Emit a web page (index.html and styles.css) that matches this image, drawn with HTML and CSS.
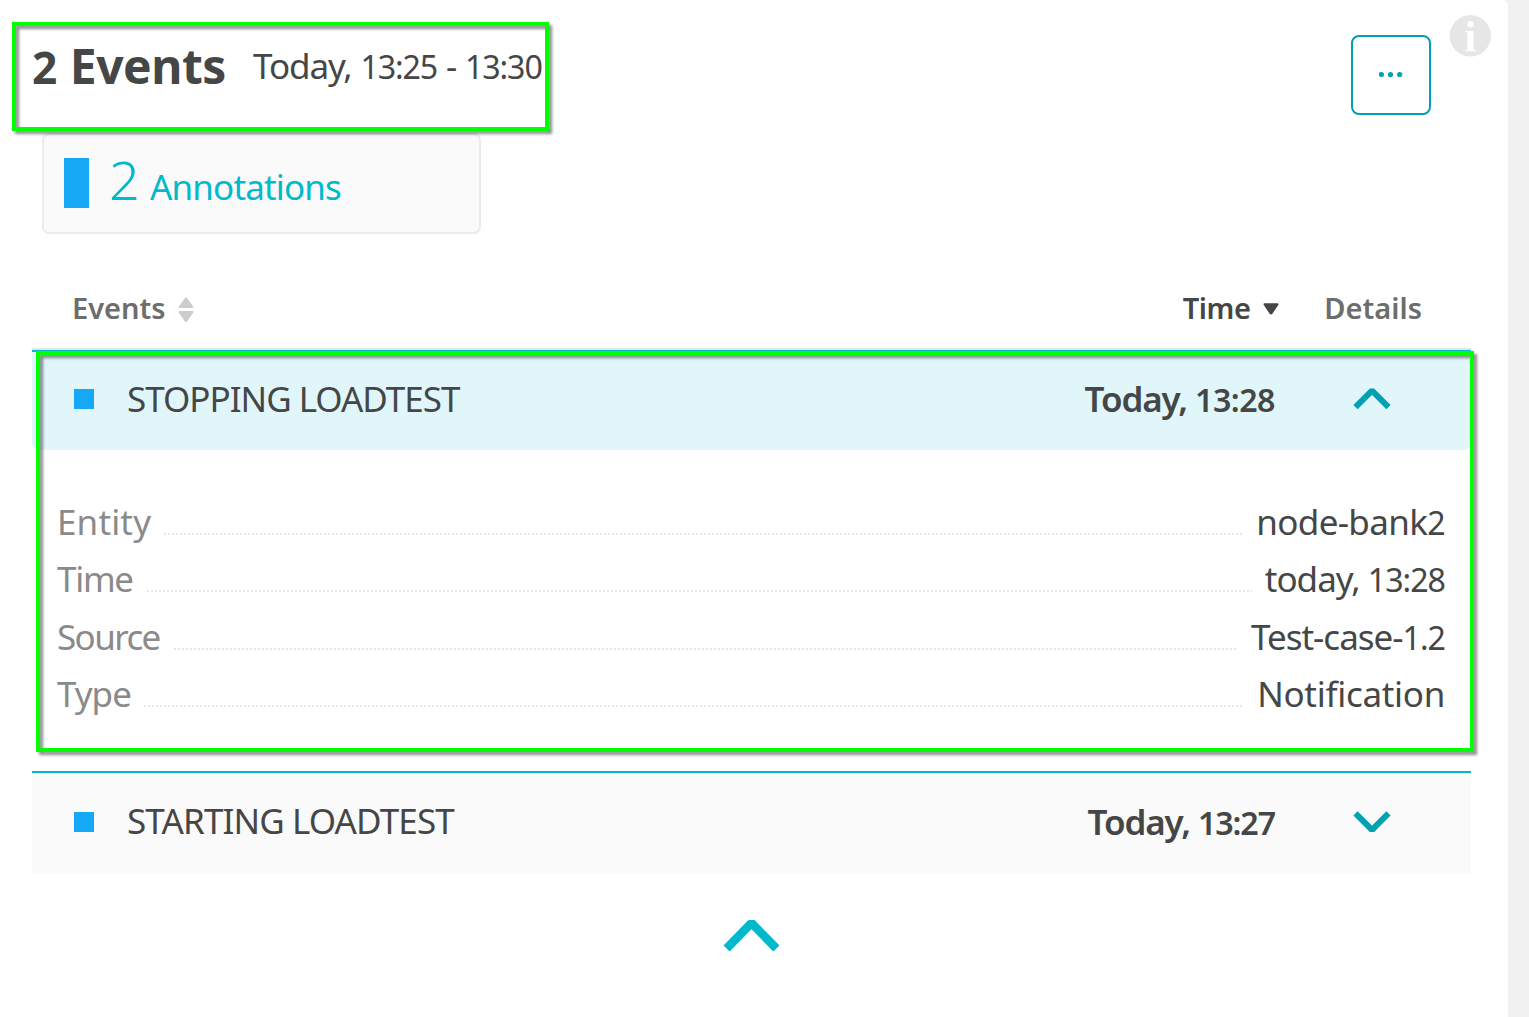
FILE: index.html
```html
<!DOCTYPE html>
<html lang="en">
<head>
<meta charset="utf-8">
<title>Events</title>
<link rel="stylesheet" href="styles.css">
</head>
<body>
<main class="panel">
  <header class="head">
    <h1 class="title"><span class="num">2</span> Events</h1>
    <span class="range">Today, <span class="num">13:25</span> - <span class="num">13:30</span></span>
    <button class="more" aria-label="More">
      <svg width="24" height="8" viewBox="0 0 24 8" fill="#00a1b2"><circle cx="2.4" cy="3.5" r="2.6"/><circle cx="11.5" cy="3.5" r="2.6"/><circle cx="20.7" cy="3.5" r="2.6"/></svg>
    </button>
    <svg class="info" width="42" height="42" viewBox="0 0 42 42"><circle cx="21.3" cy="20.8" r="20.7" fill="#e6e6e6"/><circle cx="21.5" cy="9.3" r="3.2" fill="#fff"/><path d="M16 16H24.6V34.2Q24.8 35.2 27 35.3V36.2H16V35.3Q18.2 35.2 18.4 34.2V18.4Q18.2 17.2 16 17Z" fill="#fff"/></svg>
  </header>

  <section class="legend">
    <span class="swatch"></span>
    <span class="count">2</span>
    <span class="kind">Annotations</span>
  </section>

  <section class="table">
    <div class="columns">
      <span class="col-events">Events</span>
      <svg class="sort" width="16" height="26" viewBox="0 0 16 26" fill="#ccc"><path d="M7 1Q8 0 9 1L15.3 9.8Q15.8 11 14.6 11H1.4Q.2 11 .7 9.8Z"/><path d="M7 24.6Q8 25.6 9 24.6L15.3 15.4Q15.8 14 14.6 14H1.4Q.2 14 .7 15.4Z"/></svg>
      <span class="col-time">Time</span>
      <svg class="sorted" width="16" height="12" viewBox="0 0 16 12" fill="#454646"><path d="M6.6 10.8Q8 12.2 9.4 10.8L15.4 1.8Q15.8 .3 14.6 .3H1.4Q.2 .3 .6 1.8Z"/></svg>
      <span class="col-details">Details</span>
    </div>

    <div class="row open">
      <span class="dot"></span>
      <span class="name stopping">STOPPING LOADTEST</span>
      <span class="when">Today, <span class="num">13:28</span></span>
      <svg class="chevron" width="38" height="24" viewBox="0 0 38 24"><path d="M2.5 20.2L19 3.7L35.5 20.2"/></svg>
    </div>

    <dl class="details">
      <div class="pair"><dt class="entity">Entity</dt><i class="leader"></i><dd class="node">node-bank<span class="num">2</span></dd></div>
      <div class="pair"><dt class="time">Time</dt><i class="leader"></i><dd class="today">today, <span class="num">13:28</span></dd></div>
      <div class="pair"><dt class="source">Source</dt><i class="leader"></i><dd class="test">Test-case-<span class="num">1.2</span></dd></div>
      <div class="pair"><dt class="type">Type</dt><i class="leader"></i><dd class="note">Notification</dd></div>
    </dl>

    <div class="row">
      <span class="dot"></span>
      <span class="name starting">STARTING LOADTEST</span>
      <span class="when earlier">Today, <span class="num">13:27</span></span>
      <svg class="chevron" width="38" height="24" viewBox="0 0 38 24"><path d="M2.5 3.3L19 19.8L35.5 3.3"/></svg>
    </div>
  </section>

  <svg class="collapse" width="56" height="34" viewBox="0 0 56 34"><path d="M3.6 29.6L28.5 4.1L53.4 29.6"/></svg>
</main>
<div class="mark mark-title"></div>
<div class="mark mark-event"></div>
</body>
</html>
```
FILE: styles.css
```css
* { box-sizing: border-box; }
body {
  margin: 0;
  height: 1017px;
  overflow: hidden;
  background: #f1f1f1;
  color: #454646;
  font-family: "Noto Sans", "Open Sans", sans-serif;
  font-size: 35px;
  line-height: 48px;
  white-space: nowrap;
}
.num { font-size: .92em; }
.panel {
  display: flex;
  flex-direction: column;
  width: 1508px;
  height: 1017px;
  padding-left: 32px;
  background: #fff;
  border-top-right-radius: 5px;
}
.head { display: flex; height: 133px; padding-right: 17px; }
.title {
  width: 221px;
  margin: 33px 0 0;
  font-size: 48px;
  font-weight: 700;
  line-height: 66px;
  letter-spacing: -.5px;
  word-spacing: 1px;
}
.range { margin-top: 42px; letter-spacing: -1.1px; word-spacing: .8px; }
.more {
  display: flex;
  align-items: center;
  justify-content: center;
  width: 80px;
  height: 80px;
  margin: 35px 18px 0 auto;
  padding: 0 0 1px;
  border: 2px solid #00a1b2;
  border-radius: 8px;
  background: #fff;
}
.info { margin-top: 15px; }
.legend {
  display: flex;
  width: 439px;
  height: 101px;
  margin-left: 10px;
  padding: 23px 20px;
  border: 2px solid #ebebeb;
  border-radius: 7px;
  background: #fafafa;
  color: #00b9cc;
}
.swatch { width: 25px; height: 50px; background: #14a8f5; }
.count { width: 40px; margin: -16px 0 0 20px; font-size: 54px; font-weight: 300; line-height: 74px; }
.kind { margin-top: 5px; margin-left: 1px; letter-spacing: -.85px; }
.table { width: 1439px; margin-top: 36px; }
.columns {
  display: flex;
  align-items: center;
  height: 80px;
  padding: 0 49px 2px 40px;
  border-bottom: 2px solid #e5e5e5;
  color: #6d6d6d;
  font-size: 29px;
  font-weight: 600;
}
.sort { margin: 3px 0 0 12px; }
.col-time { margin-left: auto; color: #454646; letter-spacing: -.5px; }
.sorted { margin: 2px 45px 0 13px; }
.row {
  display: flex;
  align-items: center;
  height: 102px;
  padding: 0 80px 2px 42px;
  border-top: 2px solid #00b9cc;
  background: #fafafa;
}
.open { height: 100px; border-radius: 0 0 7px 7px; padding-bottom: 4px; background: #e1f6fa; }
.dot { width: 20px; height: 20px; background: #14a8f5; }
.name { margin: -1px 0 0 33px; }
.stopping { letter-spacing: -1px; }
.starting { margin-top: -2px; letter-spacing: -.87px; }
.when { margin: 0 0 0 auto; font-weight: 600; letter-spacing: -1.1px; }
.when .num { letter-spacing: -.5px; }
.earlier .num { letter-spacing: -1.1px; }
.chevron { margin-left: 78px; fill: none; stroke: #00a1b2; stroke-width: 6; stroke-linejoin: bevel; }
.details { height: 321px; margin: 0; padding: 48px 26px 0 25px; }
.pair { display: flex; height: 57.4px; }
dt { color: #8a8a8a; }
dd { margin: 0; }
.entity { letter-spacing: .15px; }
.time { padding-right: 1px; letter-spacing: -1.3px; }
.source { padding-right: 1px; letter-spacing: -1.6px; }
.type { letter-spacing: -1px; }
.node { letter-spacing: -.65px; }
.today { letter-spacing: -1px; }
.test { letter-spacing: -1px; }
.note { letter-spacing: -.3px; }
.leader {
  flex: 1;
  height: 2px;
  margin: 35px 13px 0;
  background: repeating-linear-gradient(90deg, #e5e5e5 0 2px, transparent 2px 4px);
}
.collapse { margin: 46px 0 0 691px; fill: none; stroke: #00b9cc; stroke-width: 8.6; stroke-linejoin: bevel; }
.mark { position: absolute; border: 4px solid #0f0; filter: drop-shadow(3px 3px 1.5px rgba(0, 0, 0, .45)); }
.mark-title { left: 12px; top: 22px; width: 537px; height: 109px; }
.mark-event { left: 36px; top: 351px; width: 1438px; height: 401px; }
```
